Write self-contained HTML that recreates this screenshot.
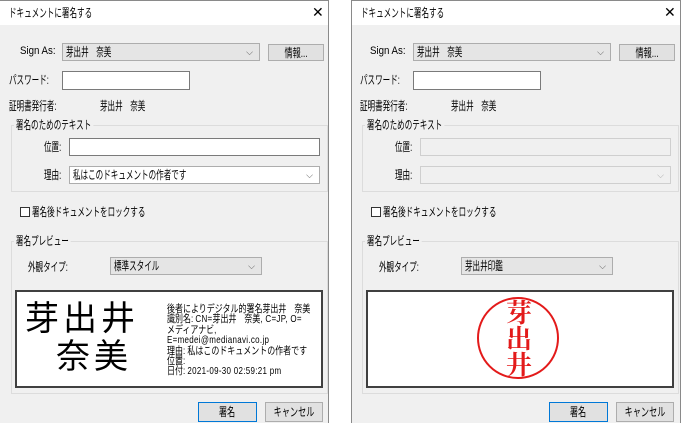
<!DOCTYPE html>
<html><head><meta charset="utf-8"><style>
*{margin:0;padding:0;box-sizing:border-box}
body{width:681px;height:423px;background:#fff;position:relative;overflow:hidden;font-family:"Liberation Sans","Noto Sans CJK JP",sans-serif;font-size:12px;color:#000}
.dlg{position:absolute;top:0;width:330px;height:423px;background:#f0f0f0;border:1px solid #8a8a8a;border-bottom:none}
.t{position:absolute;white-space:nowrap;line-height:14px;transform:scaleX(0.63);transform-origin:0 0}
.l{transform:none}
.sa{position:absolute;white-space:nowrap;line-height:14px;font-size:11px;transform:scaleX(0.88);transform-origin:0 0}
.title{position:absolute;left:0;top:0;width:100%;height:24px;background:#fff}
.box{position:absolute;background:#fff;border:1px solid #7a7a7a}
.combo{position:absolute;background:#e5e5e5;border:1px solid #adadad}
.btn{position:absolute;background:#e1e1e1;border:1px solid #adadad;text-align:center;line-height:16px;white-space:nowrap}
.btn span{display:inline-block;transform:scaleX(0.68);margin:0 -20px}
.grp{position:absolute;border:1px solid #dcdcdc}
.gl{position:absolute;background:#f0f0f0;padding:0 3px;line-height:12px;white-space:nowrap;transform:scaleX(0.63);transform-origin:0 0}
.arr{position:absolute;right:6px;top:3px;font-size:9px;color:#555}
.dis{position:absolute;background:#f0f0f0;border:1px solid #cfcfcf}
.pv{position:absolute;left:150px;top:12px;font-size:10.5px;line-height:10.4px;white-space:nowrap;transform:scaleX(0.76);transform-origin:0 0}
.pv i{font-style:normal;letter-spacing:0.4px}
</style></head><body>

<!-- LEFT -->
<div class="dlg" style="left:-1px">
 <div class="title"><span class="t" style="left:9px;top:5px">ドキュメントに署名する</span><span class="t l" style="left:312px;top:4px;font-size:14px">✕</span></div>
 <span class="sa" style="left:20px;top:43px">Sign As:</span>
 <div class="combo" style="left:62px;top:42px;width:198px;height:18px"><span class="t" style="left:3px;top:1px">芽出井　奈美</span><span class="arr">⌵</span></div>
 <div class="btn" style="left:268px;top:43px;width:56px;height:17px"><span>情報...</span></div>
 <span class="t" style="left:9px;top:72px">パスワード:</span>
 <div class="box" style="left:62px;top:70px;width:128px;height:19px"></div>
 <span class="t" style="left:9px;top:98px">証明書発行者:</span>
 <span class="t" style="left:100px;top:98px">芽出井　奈美</span>
 <div class="grp" style="left:11px;top:124px;width:317px;height:67px"></div>
 <span class="gl" style="left:14px;top:118px">署名のためのテキスト</span>
 <span class="t" style="left:44px;top:139px">位置:</span>
 <div class="box" style="left:69px;top:137px;width:251px;height:18px"></div>
 <span class="t" style="left:44px;top:167px">理由:</span>
 <div class="box" style="left:69px;top:165px;width:251px;height:18px;border-color:#adadad"><span class="t" style="left:3px;top:1px">私はこのドキュメントの作者です</span><span class="arr">⌵</span></div>
 <div style="position:absolute;left:20px;top:206px;width:10px;height:10px;border:1px solid #333;background:#fff"></div>
 <span class="t" style="left:32px;top:204px">署名後ドキュメントをロックする</span>
 <div class="grp" style="left:11px;top:240px;width:317px;height:153px"></div>
 <span class="gl" style="left:14px;top:234px">署名プレビュー</span>
 <span class="t" style="left:28px;top:259px">外観タイプ:</span>
 <div class="combo" style="left:110px;top:256px;width:152px;height:18px"><span class="t" style="left:3px;top:1px">標準スタイル</span><span class="arr">⌵</span></div>
 <div class="box" style="left:15px;top:289px;width:308px;height:98px;border:2px solid #404040">
  <div class="t l" style="left:8px;top:8px;font-size:34px;line-height:38px;letter-spacing:4px">芽出井</div>
  <div class="t l" style="left:39px;top:46px;font-size:34px;line-height:38px;letter-spacing:4px">奈美</div>
  <div class="pv">後者によりデジタル的署名芽出井　奈美<br>識別名: <i>CN=</i>芽出井　奈美<i>, C=JP, O=</i><br>メディアナビ,<br><i>E=medei@medianavi.co.jp</i><br>理由: 私はこのドキュメントの作者です<br>位置:<br>日付: <i>2021-09-30 02:59:21 pm</i></div>
 </div>
 <div class="btn" style="left:198px;top:401px;width:59px;height:20px;border:1px solid #0078d7;line-height:18px"><span>署名</span></div>
 <div class="btn" style="left:265px;top:401px;width:58px;height:20px;line-height:18px"><span>キャンセル</span></div>
</div>

<!-- RIGHT -->
<div class="dlg" style="left:351px">
 <div class="title"><span class="t" style="left:9px;top:5px">ドキュメントに署名する</span><span class="t l" style="left:312px;top:4px;font-size:14px">✕</span></div>
 <span class="sa" style="left:18px;top:43px">Sign As:</span>
 <div class="combo" style="left:61px;top:42px;width:198px;height:18px"><span class="t" style="left:3px;top:1px">芽出井　奈美</span><span class="arr">⌵</span></div>
 <div class="btn" style="left:267px;top:43px;width:56px;height:17px"><span>情報...</span></div>
 <span class="t" style="left:8px;top:72px">パスワード:</span>
 <div class="box" style="left:61px;top:70px;width:128px;height:19px"></div>
 <span class="t" style="left:8px;top:98px">証明書発行者:</span>
 <span class="t" style="left:99px;top:98px">芽出井　奈美</span>
 <div class="grp" style="left:10px;top:124px;width:317px;height:67px"></div>
 <span class="gl" style="left:13px;top:118px">署名のためのテキスト</span>
 <span class="t" style="left:43px;top:139px">位置:</span>
 <div class="dis" style="left:68px;top:137px;width:251px;height:18px"></div>
 <span class="t" style="left:43px;top:167px">理由:</span>
 <div class="dis" style="left:68px;top:165px;width:251px;height:18px"><span class="arr" style="color:#aaa">⌵</span></div>
 <div style="position:absolute;left:19px;top:206px;width:10px;height:10px;border:1px solid #333;background:#fff"></div>
 <span class="t" style="left:31px;top:204px">署名後ドキュメントをロックする</span>
 <div class="grp" style="left:10px;top:240px;width:317px;height:153px"></div>
 <span class="gl" style="left:13px;top:234px">署名プレビュー</span>
 <span class="t" style="left:27px;top:259px">外観タイプ:</span>
 <div class="combo" style="left:109px;top:256px;width:152px;height:18px"><span class="t" style="left:3px;top:1px">芽出井印鑑</span><span class="arr">⌵</span></div>
 <div class="box" style="left:14px;top:289px;width:308px;height:98px;border:2px solid #404040">
  <div style="position:absolute;left:109px;top:5px;width:82px;height:82px;border:2px solid #e31a1a;border-radius:50%"></div>
  <div class="t l" style="left:136px;top:7px;width:30px;text-align:center;font-family:'Noto Serif CJK SC','Noto Sans CJK JP',serif;font-weight:bold;color:#e31a1a;font-size:26px;line-height:26px">芽<br>出<br>井</div>
 </div>
 <div class="btn" style="left:197px;top:401px;width:59px;height:20px;border:1px solid #0078d7;line-height:18px"><span>署名</span></div>
 <div class="btn" style="left:264px;top:401px;width:58px;height:20px;line-height:18px"><span>キャンセル</span></div>
</div>
</body></html>
